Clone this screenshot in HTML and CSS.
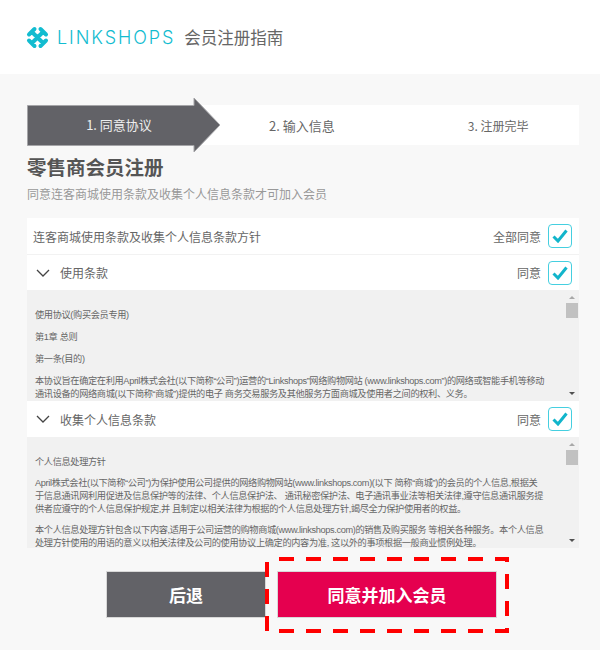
FILE: index.html
```html
<!DOCTYPE html>
<html lang="zh-CN">
<head>
  <meta charset="UTF-8">
  <meta name="viewport" content="width=device-width, initial-scale=1.0">
  <title>LINKSHOPS 会员注册指南</title>
  <link rel="stylesheet" href="styles.css">
</head>
<body>

  <!-- Header -->
  <header class="header">
    <svg class="logo-icon" width="23" height="23" viewBox="0 0 23 23">
      <path d="M6 6L17 17M17 6L6 17M8.5 3L3 8.5M14.5 3L20 8.5M8.5 20L3 14.5M14.5 20L20 14.5" fill="none" stroke="#12bcd0" stroke-width="4" stroke-linecap="round"/>
    </svg>
    <span class="logo-text">LINKSHOPS</span>
    <span class="header-title">会员注册指南</span>
  </header>

  <main class="content">

    <!-- Steps -->
    <div class="steps">
      <div class="step step-active">
        <span>1. 同意协议</span>
        <svg class="step-arrow" width="193" height="54" viewBox="0 0 193 54">
          <path d="M0.5 7.5H167V0L193 27L167 54V47.5H0.5Z" fill="#626267" stroke="#a5a5a8" stroke-width="1"/>
        </svg>
      </div>
      <div class="step step-two">2. 输入信息</div>
      <div class="step step-three">3. 注册完毕</div>
    </div>

    <h1 class="title">零售商会员注册</h1>
    <p class="subtitle">同意连客商城使用条款及收集个人信息条款才可加入会员</p>

    <!-- Agreements -->
    <div class="agree-box">
      <div class="row row-all">
        <span class="row-name">连客商城使用条款及收集个人信息条款方针</span>
        <span class="row-agree">全部同意</span>
        <span class="check"><svg width="16" height="14" viewBox="0 0 16 14"><path d="M1.5 7.5L6 12L14.5 1.5" fill="none" stroke="#12b5cb" stroke-width="3"/></svg></span>
      </div>

      <div class="row row-first">
        <svg class="chevron" width="14" height="8" viewBox="0 0 14 8"><path d="M1 1L7 7L13 1" fill="none" stroke="#444" stroke-width="1.3"/></svg>
        <span class="row-name">使用条款</span>
        <span class="row-agree">同意</span>
        <span class="check"><svg width="16" height="14" viewBox="0 0 16 14"><path d="M1.5 7.5L6 12L14.5 1.5" fill="none" stroke="#12b5cb" stroke-width="3"/></svg></span>
      </div>
      <div class="panel">
        <div class="panel-text">
          <p>使用协议(购买会员专用)</p>
          <p>第1章 总则</p>
          <p>第一条(目的)</p>
          <p>本协议旨在确定在利用April株式会社(以下简称“公司”)运营的“Linkshops”网络购物网站 (www.linkshops.com”)的网络或智能手机等移动<br>通讯设备的网络商城(以下简称“商城”)提供的电子 商务交易服务及其他服务方面商城及使用者之间的权利、义务。</p>
        </div>
        <div class="scrollbar">
          <span class="scroll-up"></span>
          <span class="scroll-thumb"></span>
          <span class="scroll-down"></span>
        </div>
      </div>

      <div class="row">
        <svg class="chevron" width="14" height="8" viewBox="0 0 14 8"><path d="M1 1L7 7L13 1" fill="none" stroke="#444" stroke-width="1.3"/></svg>
        <span class="row-name">收集个人信息条款</span>
        <span class="row-agree">同意</span>
        <span class="check"><svg width="16" height="14" viewBox="0 0 16 14"><path d="M1.5 7.5L6 12L14.5 1.5" fill="none" stroke="#12b5cb" stroke-width="3"/></svg></span>
      </div>
      <div class="panel">
        <div class="panel-text panel-text-tight">
          <p>个人信息处理方针</p>
          <p>April株式会社(以下简称“公司”)为保护使用公司提供的网络购物网站(www.linkshops.com)(以下 简称“商城”)的会员的个人信息,根据关<br>于信息通讯网利用促进及信息保护等的法律、个人信息保护法、 通讯秘密保护法、电子通讯事业法等相关法律,遵守信息通讯服务提<br>供者应遵守的个人信息保护规定,并 且制定以相关法律为根据的个人信息处理方针,竭尽全力保护使用者的权益。</p>
          <p>本个人信息处理方针包含以下内容,适用于公司运营的购物商城(www.linkshops.com)的销售及购买服务 等相关各种服务。本个人信息<br>处理方针使用的用语的意义以相关法律及公司的使用协议上确定的内容为准, 这以外的事项根据一般商业惯例处理。</p>
        </div>
        <div class="scrollbar">
          <span class="scroll-up"></span>
          <span class="scroll-thumb"></span>
          <span class="scroll-down"></span>
        </div>
      </div>
    </div>

    <!-- Buttons -->
    <div class="buttons">
      <button type="button" class="btn btn-back">后退</button>
      <div class="btn-wrap">
        <button type="button" class="btn btn-join">同意并加入会员</button>
        <svg class="dash-box" width="244" height="76" viewBox="0 0 244 76">
          <rect x="2" y="2" width="240" height="72" fill="none" stroke="#ff0000" stroke-width="4" stroke-dasharray="15 12" stroke-dashoffset="15"/>
        </svg>
      </div>
    </div>

  </main>

</body>
</html>
```

FILE: styles.css
```css
body {
  font-family: "Noto Sans CJK SC", "Liberation Sans", sans-serif;
  margin: 0;
  padding: 0;
  background-color: #f8f8f8;
  color: #666;
  height: 650px;
  overflow: hidden;
}
p {
  margin: 0;
}

/* header */
.header {
  background-color: white;
  height: 74px;
  padding-left: 26px;
  box-sizing: border-box;
  display: flex;
  align-items: center;
}
.logo-icon {
  margin-right: 8px;
}
.logo-text {
  font-family: Inter, sans-serif;
  font-weight: 300;
  font-size: 18px;
  letter-spacing: 1.9px;
  color: #12bcd0;
  margin-right: 9px;
}
.header-title {
  font-size: 16.5px;
  color: #666;
}

/* main column */
.content {
  padding: 31px 21px 0 27px;
}

/* steps */
.steps {
  background-color: white;
  height: 40px;
  display: flex;
  align-items: center;
  font-size: 13px;
}
.step {
  color: #666;
  white-space: nowrap;
}
.step-active {
  position: relative;
  width: 192px;
  height: 40px;
  line-height: 40px;
  text-align: center;
  color: #eee;
}
.step-active span {
  position: relative;
  z-index: 1;
  margin-left: -8px;
}
.step-arrow {
  position: absolute;
  left: 0;
  top: -7px;
}
.step-two {
  margin-left: 50px;
}
.step-three {
  margin-left: 133px;
  font-size: 12px;
}

/* heading */
.title {
  margin: 9px 0 0 0;
  font-size: 19.5px;
  line-height: 26px;
  font-weight: 700;
  color: #555;
}
.subtitle {
  margin-top: 5px;
  font-size: 12px;
  line-height: 18px;
  color: #999;
}

/* agreement box */
.agree-box {
  margin-top: 15px;
}
.row {
  background-color: white;
  height: 36px;
  display: flex;
  align-items: center;
  padding: 0 7px 0 9px;
  font-size: 12px;
}
.row-all {
  height: 37px;
  border-bottom: 1px solid #f2f2f2;
  padding-left: 6px;
  box-sizing: border-box;
}
.row-first {
  height: 35px;
}
.row-name {
  flex: 1;
  margin-left: 10px;
}
.row-all .row-name {
  margin-left: 0;
}
.row-agree {
  margin-right: 7px;
}
.chevron {
  flex: none;
}
.check {
  width: 22px;
  height: 22px;
  border: 1px solid #45cfe0;
  border-radius: 4px;
  background-color: white;
  display: flex;
  align-items: center;
  justify-content: center;
}

/* scrolling text panels */
.panel {
  background-color: #f1f1f1;
  height: 111px;
  display: flex;
  overflow: hidden;
}
.panel-text {
  flex: 1;
  min-width: 0;
  padding: 19px 0 0 8px;
  font-family: "Liberation Sans", "Noto Sans CJK SC", sans-serif;
  font-size: 9.2px;
  letter-spacing: -0.35px;
  line-height: 13px;
  color: #666;
  white-space: nowrap;
}
.panel-text p {
  margin-bottom: 9px;
}
.panel-text-tight p {
  margin-bottom: 8px;
}
.scrollbar {
  width: 13px;
  margin-right: 1px;
  display: flex;
  flex-direction: column;
  align-items: center;
  padding: 6px 0;
  box-sizing: border-box;
}
.scroll-up {
  width: 0;
  height: 0;
  border-left: 3px solid transparent;
  border-right: 3px solid transparent;
  border-bottom: 3px solid #a8a8a8;
}
.scroll-thumb {
  width: 12px;
  height: 15px;
  margin-top: 4px;
  background-color: #c1c1c1;
}
.scroll-down {
  width: 0;
  height: 0;
  margin-top: auto;
  border-left: 3px solid transparent;
  border-right: 3px solid transparent;
  border-top: 3px solid #505050;
}

/* buttons */
.buttons {
  display: flex;
  margin: 23px 0 0 79px;
}
.btn {
  height: 47px;
  border: 1px solid #d8d8d8;
  font-family: inherit;
  font-size: 17px;
  font-weight: 700;
  color: white;
  cursor: pointer;
}
.btn-back {
  width: 160px;
  background-color: #626267;
}
.btn-wrap {
  position: relative;
  margin-left: 11px;
}
.btn-join {
  width: 220px;
  background-color: #e5004f;
  display: block;
}
.dash-box {
  position: absolute;
  left: -12px;
  top: -14px;
}
```
